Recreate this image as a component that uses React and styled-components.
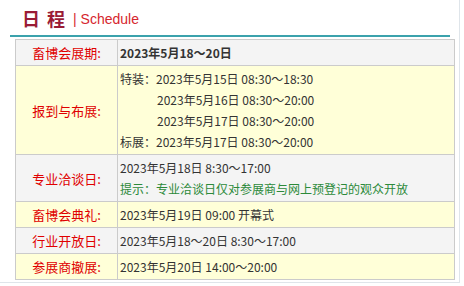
import React from 'react'
import styled, { createGlobalStyle } from 'styled-components'

const GlobalStyle = createGlobalStyle`
  body {
    margin: 0;
    background: #fff;
    font-family: 'Noto Sans CJK SC', 'Liberation Sans', sans-serif;
  }
`

const Frame = styled.div`
  width: 460px;
  height: 283px;
  box-sizing: border-box;
  border-right: 1px solid #dfe5ea;
  border-bottom: 1px solid #dfe5ea;
`

const Header = styled.div`
  margin-left: 10px;
  width: 440px;
  height: 37px;
  box-sizing: border-box;
  border-bottom: 2px solid #3ba2ac;
  display: flex;
  align-items: flex-end;
  padding: 0 0 6px 12px;
`

const Title = styled.span`
  font-family: 'Noto Sans CJK SC', sans-serif;
  font-size: 18px;
  font-weight: 700;
  line-height: 22px;
  color: #9a1b36;
  word-spacing: 3px;
`

const SubTitle = styled.span`
  font-family: 'Liberation Sans', Arial, sans-serif;
  font-size: 14px;
  line-height: 20px;
  color: #d6262e;
  margin-left: 8px;
`

const Table = styled.table`
  margin: 2px 0 0 15px;
  width: 440px;
  border-collapse: collapse;
  border: 1px solid #cbcbcb;
`

const Row = styled.tr`
  background: ${({ $tone }) => ($tone === 'yellow' ? '#ffffd8' : '#f4f4f4')};
`

const Label = styled.td`
  width: 101px;
  padding: 2px 0;
  border: 1px solid #cbcbcb;
  text-align: center;
  vertical-align: middle;
  font-size: 13px;
  line-height: 21px;
  color: #e00000;
`

const Value = styled.td`
  padding: 2px 2px;
  border: 1px solid #cbcbcb;
  vertical-align: middle;
  font-size: 12px;
  line-height: 21px;
  color: #333;
  font-weight: ${({ $bold }) => ($bold ? 700 : 400)};
`

const Line = styled.div`
  padding-left: ${({ $indent }) => ($indent ? '37px' : '0')};
  color: ${({ $hint }) => ($hint ? '#2c8a3a' : 'inherit')};
  white-space: pre;
`

export default function App() {
  return (
    <>
      <GlobalStyle />
      <Frame>
        <Header>
          <Title>日 程</Title>
          <SubTitle>| Schedule</SubTitle>
        </Header>
        <Table>
          <tbody>
            <Row>
              <Label>畜博会展期:</Label>
              <Value $bold>2023年5月18～20日</Value>
            </Row>
            <Row $tone="yellow">
              <Label>报到与布展:</Label>
              <Value>
                <Line>特装：2023年5月15日 08:30～18:30</Line>
                <Line $indent>2023年5月16日 08:30～20:00</Line>
                <Line $indent>2023年5月17日 08:30～20:00</Line>
                <Line>标展：2023年5月17日 08:30～20:00</Line>
              </Value>
            </Row>
            <Row>
              <Label>专业洽谈日:</Label>
              <Value>
                <Line>2023年5月18日 8:30～17:00</Line>
                <Line $hint>提示：专业洽谈日仅对参展商与网上预登记的观众开放</Line>
              </Value>
            </Row>
            <Row $tone="yellow">
              <Label>畜博会典礼:</Label>
              <Value>2023年5月19日 09:00 开幕式</Value>
            </Row>
            <Row>
              <Label>行业开放日:</Label>
              <Value>2023年5月18～20日 8:30～17:00</Value>
            </Row>
            <Row $tone="yellow">
              <Label>参展商撤展:</Label>
              <Value>2023年5月20日 14:00～20:00</Value>
            </Row>
          </tbody>
        </Table>
      </Frame>
    </>
  )
}
